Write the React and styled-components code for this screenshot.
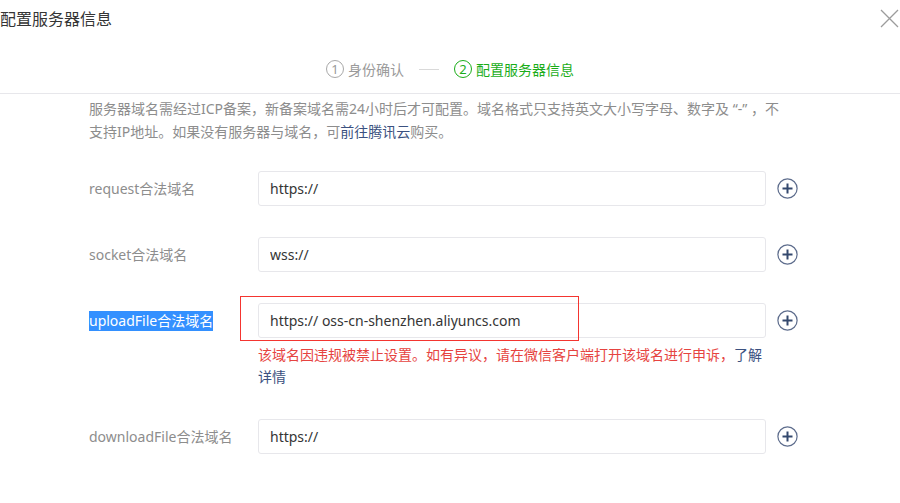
import React from 'react'
import styled, { createGlobalStyle } from 'styled-components'

const GlobalStyle = createGlobalStyle`
  html, body {
    margin: 0;
    padding: 0;
    background: #fff;
  }
  body {
    font-family: "Noto Sans", "Noto Sans CJK SC", sans-serif;
    font-size: 14px;
    color: #353535;
  }
`;

const rows = [
    { label: 'request合法域名', value: 'https://' },
    { label: 'socket合法域名', value: 'wss://' },
    { label: 'uploadFile合法域名', value: 'https:// oss-cn-shenzhen.aliyuncs.com', selected: true, error: true },
    { label: 'downloadFile合法域名', value: 'https://' },
];

function CloseIcon() {
    return (
        <svg width="19" height="19" viewBox="0 0 19 19">
            <path d="M1 1 L18 18 M18 1 L1 18" stroke="#9c9c9c" strokeWidth="1.3" fill="none" />
        </svg>
    )
}

function PlusIcon() {
    return (
        <svg width="21" height="21" viewBox="0 0 21 21">
            <circle cx="10.5" cy="10.5" r="9.6" stroke="#5d6c8c" strokeWidth="1.2" fill="none" />
            <path d="M10.5 5.5 V15.5 M5.5 10.5 H15.5" stroke="#34496e" strokeWidth="2" fill="none" />
        </svg>
    )
}

export default function App() {
    return (
        <Dialog>
            <GlobalStyle />
            <Header>
                <TitleBar>
                    <Title>配置服务器信息</Title>
                    <CloseButton><CloseIcon /></CloseButton>
                </TitleBar>
                <Steps>
                    <Step>
                        <StepNumber>1</StepNumber>
                        身份确认
                    </Step>
                    <StepDash />
                    <Step $active>
                        <StepNumber $active>2</StepNumber>
                        配置服务器信息
                    </Step>
                </Steps>
            </Header>
            <Body>
                <Description>
                    服务器域名需经过ICP备案，新备案域名需24小时后才可配置。域名格式只支持英文大小写字母、数字及 “-” ，不支持IP地址。如果没有服务器与域名，可<Link>前往腾讯云</Link>购买。
                </Description>
                <Form>
                    {rows.map((row) => (
                        <Row key={row.label}>
                            <Label>
                                <LabelText $selected={row.selected}>{row.label}</LabelText>
                            </Label>
                            <Field>
                                <Input defaultValue={row.value} readOnly />
                                {row.error && <Highlight />}
                                {row.error && (
                                    <ErrorText>
                                        该域名因违规被禁止设置。如有异议，请在微信客户端打开该域名进行申诉，<Link>了解详情</Link>
                                    </ErrorText>
                                )}
                            </Field>
                            <AddButton><PlusIcon /></AddButton>
                        </Row>
                    ))}
                </Form>
            </Body>
        </Dialog>
    )
}

const Dialog = styled.div`
  width: 900px;
  height: 503px;
  overflow: hidden;
  background: #fff;
`;
const Header = styled.div`
  border-bottom: 1px solid #e7e7eb;
`;
const TitleBar = styled.div`
  display: flex;
  justify-content: space-between;
  align-items: center;
  height: 38px;
`;
const Title = styled.h1`
  margin: 0;
  font-size: 16px;
  font-weight: 400;
  color: #353535;
  line-height: 20px;
`;
const CloseButton = styled.div`
  display: flex;
  align-items: center;
  margin-right: 1px;
  margin-top: -1px;
`;
const Steps = styled.div`
  box-sizing: border-box;
  height: 55px;
  padding-top: 7px;
  display: flex;
  justify-content: center;
  align-items: center;
  gap: 14px;
`;
const Step = styled.div`
  display: flex;
  align-items: center;
  gap: 4px;
  font-size: 14px;
  color: ${(p) => (p.$active ? '#1aad19' : '#9a9a9a')};
`;
const StepNumber = styled.span`
  box-sizing: border-box;
  width: 18px;
  height: 18px;
  border-radius: 50%;
  border: 1px solid ${(p) => (p.$active ? '#1aad19' : '#a8a8a8')};
  display: flex;
  align-items: center;
  justify-content: center;
  font-size: 13px;
  line-height: 1;
`;
const StepDash = styled.span`
  width: 20px;
  height: 1px;
  background: #d9d9d9;
  margin: 0 1px;
`;
const Body = styled.div`
  padding: 3px 0 0 89px;
`;
const Description = styled.p`
  margin: 0;
  width: 694px;
  font-size: 14px;
  line-height: 23px;
  color: #8d8d8d;
`;
const Link = styled.a`
  color: #3b5180;
  text-decoration: none;
  cursor: pointer;
`;
const Form = styled.div`
  display: flex;
  flex-direction: column;
  gap: 31px;
  margin-top: 28px;
`;
const Row = styled.div`
  display: flex;
  align-items: flex-start;
`;
const Label = styled.div`
  width: 169px;
  height: 35px;
  display: flex;
  align-items: center;
  font-size: 14px;
  color: #8d8d8d;
`;
const LabelText = styled.span`
  line-height: 20px;
  background: ${(p) => (p.$selected ? '#3390ff' : 'transparent')};
  color: ${(p) => (p.$selected ? '#fff' : '#8d8d8d')};
`;
const Field = styled.div`
  position: relative;
  width: 508px;
`;
const Input = styled.input`
  box-sizing: border-box;
  display: block;
  width: 100%;
  height: 35px;
  padding: 0 11px;
  border: 1px solid #e7e7eb;
  border-radius: 3px;
  font-family: inherit;
  font-size: 14px;
  color: #353535;
  outline: none;
  background: #fff;
`;
const Highlight = styled.div`
  position: absolute;
  left: -18px;
  top: -7px;
  width: 339px;
  height: 45px;
  box-sizing: border-box;
  border: 1px solid #f43530;
  pointer-events: none;
`;
const ErrorText = styled.div`
  margin-top: 6px;
  font-size: 14px;
  line-height: 22px;
  color: #e64340;
`;
const AddButton = styled.div`
  height: 35px;
  display: flex;
  align-items: center;
  margin-left: 11px;
`;
